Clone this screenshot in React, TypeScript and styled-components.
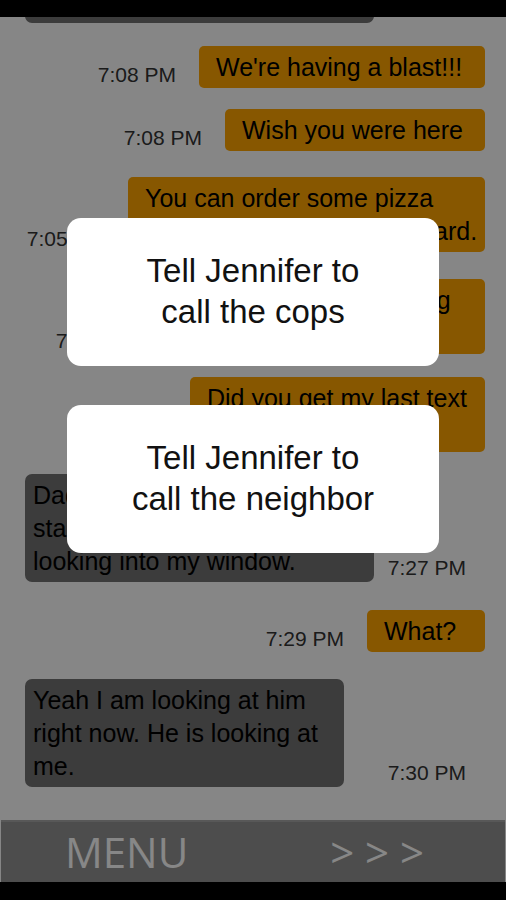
import React from "react";
import styled, { createGlobalStyle } from "styled-components";

type Message = {
  id: number;
  side: "in" | "out";
  text: string;
  time: string;
  width: number;
  gap: number;
};

const messages: Message[] = [
  { id: 0, side: "in", text: "Are you guys having fun\nat the party?", time: "7:06 PM", width: 349, gap: 0 },
  { id: 1, side: "out", text: "We're having a blast!!!", time: "7:08 PM", width: 286, gap: 23 },
  { id: 2, side: "out", text: "Wish you were here", time: "7:08 PM", width: 260, gap: 21 },
  { id: 3, side: "out", text: "You can order some pizza\nwith the cash in the cupboard.", time: "7:05 PM", width: 357, gap: 26 },
  { id: 4, side: "out", text: "What are you guys doing\ntonight?", time: "7:10 PM", width: 328, gap: 27 },
  { id: 5, side: "out", text: "Did you get my last text\nhoney?", time: "7:15 PM", width: 295, gap: 23 },
  { id: 6, side: "in", text: "Dad, there is a strange man\nstanding outside my house\nlooking into my window.", time: "7:27 PM", width: 349, gap: 22 },
  { id: 7, side: "out", text: "What?", time: "7:29 PM", width: 118, gap: 28 },
  { id: 8, side: "in", text: "Yeah I am looking at him\nright now. He is looking at\nme.", time: "7:30 PM", width: 319, gap: 27 },
];

const choices = ["Tell Jennifer to\ncall the cops", "Tell Jennifer to\ncall the neighbor"];

const App = () => {
  return (
    <>
      <GlobalStyle />
      <Screen>
        <StatusBar />
        <Chat>
          {messages.map((m) =>
            m.side === "out" ? (
              <OutRow key={m.id} $gap={m.gap}>
                <Time>{m.time}</Time>
                <OutBubble $w={m.width}>{m.text}</OutBubble>
              </OutRow>
            ) : (
              <InRow key={m.id} $gap={m.gap}>
                <InBubble $w={m.width}>{m.text}</InBubble>
                <InTime>{m.time}</InTime>
              </InRow>
            )
          )}
        </Chat>
        <MenuBar>
          <MenuLabel>MENU</MenuLabel>
          <MenuLabel>&gt; &gt; &gt;</MenuLabel>
        </MenuBar>
        <NavBar />
        <Overlay>
          {choices.map((c) => (
            <Choice key={c}>{c}</Choice>
          ))}
        </Overlay>
      </Screen>
    </>
  );
};

export default App;

const GlobalStyle = createGlobalStyle`
  html, body {
    margin: 0;
    padding: 0;
    background: #000;
  }
  body {
    font-family: "Liberation Sans", Arial, sans-serif;
  }
`;

const Screen = styled.div`
  position: relative;
  width: 506px;
  height: 900px;
  display: flex;
  flex-direction: column;
  background: #fefefe;
  overflow: hidden;
`;

const StatusBar = styled.div`
  height: 17px;
  flex: none;
  background: #000;
  position: relative;
  z-index: 1;
`;

const Chat = styled.div`
  flex: 1;
  min-height: 0;
  display: flex;
  flex-direction: column;
  justify-content: flex-end;
  overflow: hidden;
  padding-bottom: 33px;
`;

const OutRow = styled.div<{ $gap: number }>`
  display: flex;
  justify-content: flex-end;
  align-items: flex-end;
  gap: 23px;
  margin-top: ${(p) => p.$gap}px;
  padding-right: 21px;
  flex: none;
`;

const InRow = styled.div<{ $gap: number }>`
  display: flex;
  align-items: flex-end;
  margin-top: ${(p) => p.$gap}px;
  padding-left: 25px;
  padding-right: 40px;
  flex: none;
`;

const Bubble = styled.div<{ $w: number }>`
  width: ${(p) => p.$w}px;
  box-sizing: border-box;
  white-space: pre;
  overflow: hidden;
  font-size: 25px;
  line-height: 33px;
  color: #000;
`;

const OutBubble = styled(Bubble)`
  background: #ffa500;
  border-radius: 5px;
  padding: 4.5px 8px 4.5px 17px;
`;

const InBubble = styled(Bubble)`
  background: #717171;
  border-radius: 7px;
  padding: 4.5px 8px;
`;

const Time = styled.span`
  font-size: 21px;
  line-height: 24px;
  color: #333;
  margin-bottom: 1px;
  white-space: nowrap;
`;

const InTime = styled(Time)`
  margin-left: auto;
  margin-bottom: 2px;
`;

const MenuBar = styled.div`
  height: 60px;
  flex: none;
  margin: 0 1px;
  border-top: 2px solid #a6a6a6;
  background: #919191;
  display: flex;
  align-items: center;
  justify-content: space-between;
  padding: 0 81px 0 64px;
`;

const MenuLabel = styled.span`
  font-family: "Open Sans", "Liberation Sans", sans-serif;
  font-weight: 400;
  font-size: 42px;
  line-height: 1;
  color: #ffffff;
  white-space: pre;
`;

const NavBar = styled.div`
  height: 18px;
  flex: none;
  background: #000;
`;

const Overlay = styled.div`
  position: absolute;
  inset: 0;
  background: rgba(0, 0, 0, 0.47);
  display: flex;
  flex-direction: column;
  align-items: center;
  gap: 39px;
  padding-top: 218px;
  box-sizing: border-box;
  z-index: 2;
`;

const Choice = styled.div`
  width: 372px;
  height: 148px;
  background: #fff;
  border-radius: 14px;
  display: flex;
  align-items: center;
  justify-content: center;
  text-align: center;
  white-space: pre-line;
  font-size: 33px;
  line-height: 41px;
  color: #111;
  padding-bottom: 2px;
  box-sizing: border-box;
`;
